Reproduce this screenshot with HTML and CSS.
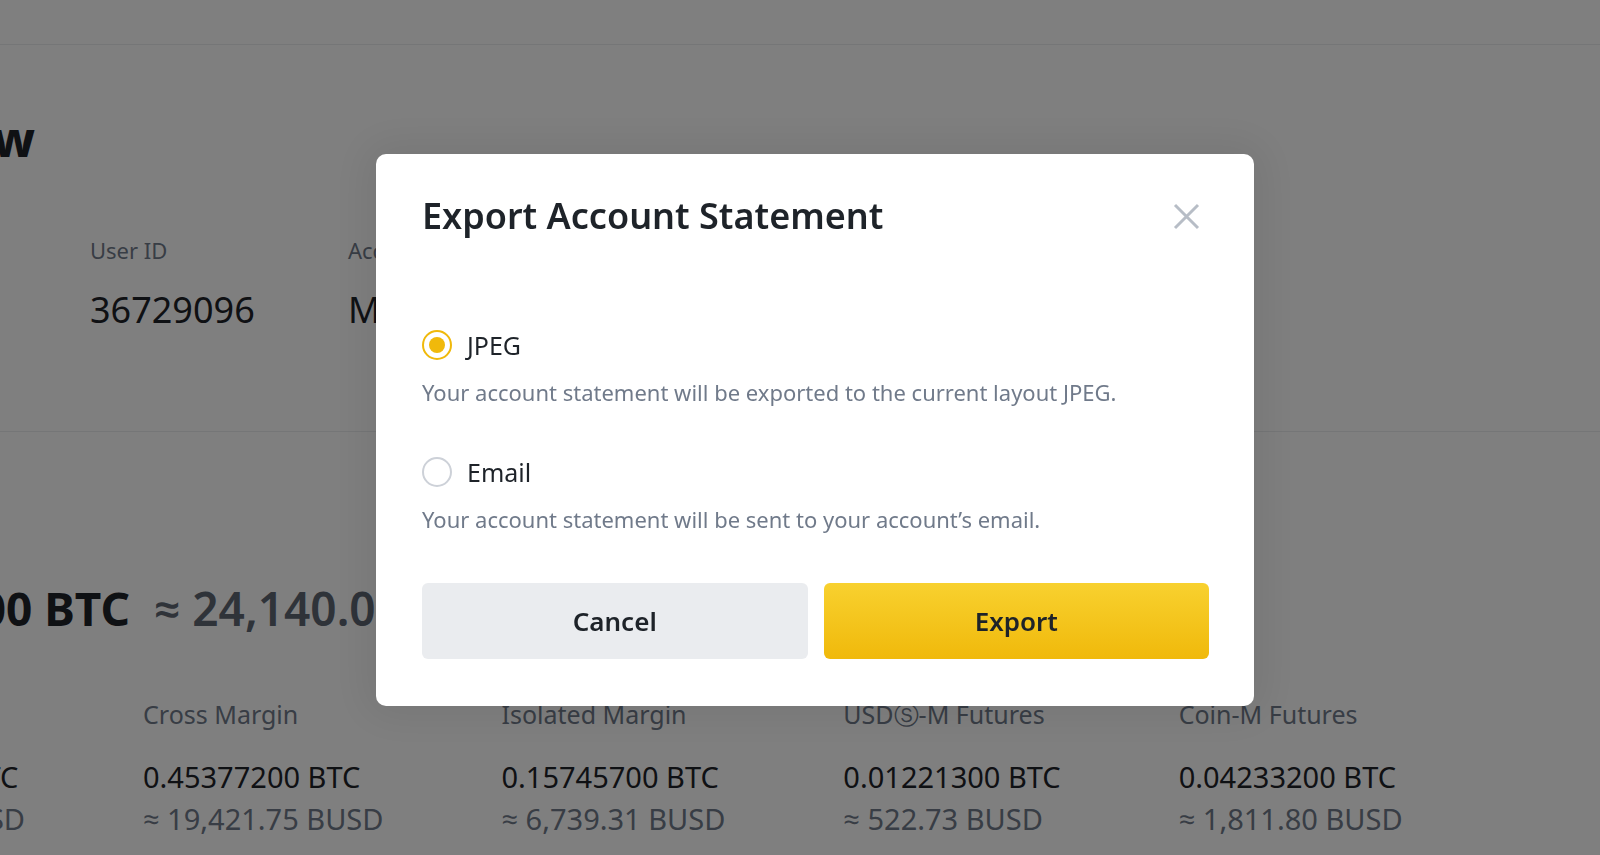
FILE: index.html
```html
<!DOCTYPE html>
<html lang="en">
<head>
<meta charset="utf-8">
<title>Export Account Statement</title>
<link rel="stylesheet" href="styles.css">
</head>
<body>
<div class="page">
  <div class="topbar"></div>
  <section class="summary">
    <div class="clip-right title-clip"><h1 class="page-title">Overview</h1></div>
    <div class="info">
      <div class="info-item">
        <div class="info-label">User ID</div>
        <div class="info-value">36729096</div>
      </div>
      <div class="info-item">
        <div class="info-label">Account Type</div>
        <div class="info-value">Main</div>
      </div>
    </div>
  </section>
  <section class="balance">
    <div class="total">
      <div class="clip-right total-clip"><span class="total-btc">0.70944200 BTC</span></div>
      <span class="total-fiat">≈ 24,140.08 BUSD</span>
    </div>
    <div class="assets">
      <div class="clip-right asset-clip">
        <div class="asset">
          <div class="asset-label">Fiat and Spot</div>
          <div class="asset-value">0.04366800 BTC</div>
          <div class="asset-fiat">≈ 1,512.46 BUSD</div>
        </div>
      </div>
      <div class="asset">
        <div class="asset-label">Cross Margin</div>
        <div class="asset-value">0.45377200 BTC</div>
        <div class="asset-fiat">≈ 19,421.75 BUSD</div>
      </div>
      <div class="asset">
        <div class="asset-label">Isolated Margin</div>
        <div class="asset-value">0.15745700 BTC</div>
        <div class="asset-fiat">≈ 6,739.31 BUSD</div>
      </div>
      <div class="asset">
        <div class="asset-label">USDⓈ-M Futures</div>
        <div class="asset-value">0.01221300 BTC</div>
        <div class="asset-fiat">≈ 522.73 BUSD</div>
      </div>
      <div class="asset">
        <div class="asset-label">Coin-M Futures</div>
        <div class="asset-value">0.04233200 BTC</div>
        <div class="asset-fiat">≈ 1,811.80 BUSD</div>
      </div>
    </div>
  </section>
</div>

<div class="overlay">
  <div class="modal">
    <div class="modal-head">
      <h2 class="modal-title">Export Account Statement</h2>
      <svg class="close-icon" width="27" height="27" viewBox="0 0 27 27" aria-label="Close">
        <path d="M2 2 L25 25 M25 2 L2 25" stroke="#b7bdc6" stroke-width="3" fill="none"/>
      </svg>
    </div>
    <div class="options">
      <div class="option">
        <div class="radio-row">
          <span class="radio radio-checked"><span class="radio-dot"></span></span>
          <span class="radio-label">JPEG</span>
        </div>
        <div class="option-desc">Your account statement will be exported to the current layout JPEG.</div>
      </div>
      <div class="option">
        <div class="radio-row">
          <span class="radio"></span>
          <span class="radio-label">Email</span>
        </div>
        <div class="option-desc">Your account statement will be sent to your account’s email.</div>
      </div>
    </div>
    <div class="actions">
      <button class="btn btn-cancel">Cancel</button>
      <button class="btn btn-export">Export</button>
    </div>
  </div>
</div>
</body>
</html>
```

FILE: styles.css
```css
* { box-sizing: border-box; }

html, body {
  margin: 0;
  padding: 0;
  width: 1600px;
  height: 855px;
  overflow: hidden;
  background: #ffffff;
  font-family: "Noto Sans", "Open Sans", "DejaVu Sans", sans-serif;
  color: #1e2329;
}

.page {
  width: 1600px;
}

.topbar {
  height: 45px;
  border-bottom: 1px solid #eaecef;
}

.clip-right {
  display: flex;
  justify-content: flex-end;
  white-space: nowrap;
}

.summary {
  padding: 64px 0 99px 0;
  border-bottom: 1px solid #eaecef;
}

.title-clip { width: 35px; }

.page-title {
  margin: 0;
  font-size: 48px;
  line-height: 60px;
  font-weight: 800;
  color: #1e2329;
}

.info {
  display: grid;
  grid-template-columns: 258px auto;
  padding-left: 90px;
  margin-top: 66px;
}

.info-label {
  font-size: 22px;
  line-height: 30px;
  color: #707a8a;
  white-space: nowrap;
}

.info-value {
  margin-top: 23px;
  font-size: 36px;
  line-height: 44px;
  color: #1e2329;
  white-space: nowrap;
}

.balance {
  padding-top: 148px;
}

.total {
  display: flex;
  align-items: baseline;
  white-space: nowrap;
}

.total-clip { width: 130px; }

.total-btc {
  font-size: 46px;
  line-height: 56px;
  font-weight: 700;
  color: #1e2329;
}

.total-fiat {
  margin-left: 24px;
  font-size: 46px;
  line-height: 56px;
  font-weight: 600;
  color: #5e6673;
}

.assets {
  display: flex;
  gap: 118px;
  margin-top: 61px;
}

.asset-clip { width: 25px; flex: none; }

.asset { flex: none; white-space: nowrap; }

.asset-label {
  font-size: 25px;
  line-height: 34px;
  color: #707a8a;
}

.asset-value {
  margin-top: 26px;
  font-size: 29px;
  line-height: 40px;
  color: #1e2329;
}

.asset-fiat {
  font-size: 29px;
  line-height: 44px;
  color: #707a8a;
}

/* Modal */
.overlay {
  position: fixed;
  inset: 0;
  background: rgba(0, 0, 0, 0.5);
  display: flex;
  align-items: flex-start;
  padding: 154px 0 0 376px;
}

.modal {
  width: 878px;
  background: #ffffff;
  border-radius: 10px;
  padding: 40px 45px 47px 46px;
  box-shadow: 0 0 40px 12px rgba(0, 0, 0, 0.07);
}

.modal-head {
  display: flex;
  align-items: center;
  justify-content: space-between;
  height: 44px;
}

.modal-title {
  margin: 0;
  font-size: 36px;
  line-height: 44px;
  font-weight: 600;
  color: #1e2329;
}

.close-icon {
  margin-right: 9px;
}

.options {
  margin-top: 90px;
  display: flex;
  flex-direction: column;
  gap: 48px;
}

.radio-row {
  display: flex;
  align-items: center;
  gap: 15px;
  height: 34px;
}

.radio {
  width: 30px;
  height: 30px;
  border-radius: 50%;
  border: 2px solid #cdd1d8;
  display: flex;
  align-items: center;
  justify-content: center;
  flex: none;
}

.radio-checked {
  border-color: #f0b90b;
}

.radio-dot {
  width: 16px;
  height: 16px;
  border-radius: 50%;
  background: #f0b90b;
}

.radio-label {
  font-size: 25px;
  line-height: 34px;
  color: #1e2329;
}

.option-desc {
  margin-top: 15px;
  font-size: 22px;
  line-height: 30px;
  color: #707a8a;
}

.actions {
  margin-top: 49px;
  display: grid;
  grid-template-columns: 1fr 1fr;
  gap: 16px;
}

.btn {
  height: 76px;
  border: none;
  border-radius: 6px;
  font-family: inherit;
  font-size: 26px;
  font-weight: 600;
  color: #1e2329;
}

.btn-cancel {
  background: #eaecef;
}

.btn-export {
  background: linear-gradient(180deg, #f8d12f 0%, #f0b90b 100%);
}
```
